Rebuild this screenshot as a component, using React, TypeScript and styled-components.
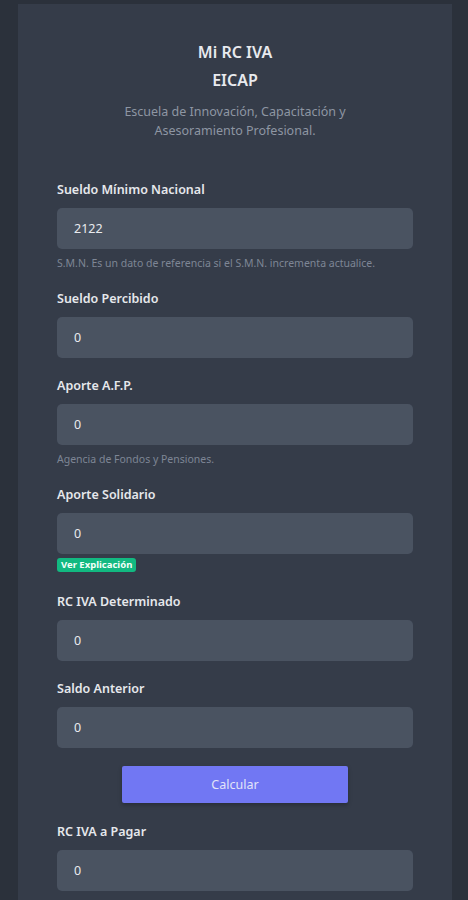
import React, { useState } from 'react';
import styled, { createGlobalStyle } from 'styled-components';

const GlobalStyle = createGlobalStyle`
  html, body {
    margin: 0;
    padding: 0;
    background: #2b313b;
  }
  body {
    font-family: 'Noto Sans', 'Open Sans', sans-serif;
    color: #e5e7eb;
  }
  * {
    box-sizing: border-box;
  }
`;

const Page = styled.main`
  padding: 4px 16px 0 18px;
  min-height: 900px;
`;

const Card = styled.div`
  background: #353c49;
  width: 434px;
  padding: 34px 39px 40px;
`;

const Header = styled.header`
  text-align: center;
  margin-bottom: 41px;
`;

const Title = styled.h1`
  margin: 0;
  font-size: 16px;
  font-weight: 600;
  line-height: 28px;
  color: #e8eaee;
`;

const Subtitle = styled.p`
  margin: 8px auto 0;
  width: 250px;
  font-size: 12.5px;
  line-height: 19px;
  color: #8e96a3;
`;

const Form = styled.form`
  display: flex;
  flex-direction: column;
`;

const Field = styled.div<{ $gap?: number }>`
  display: flex;
  flex-direction: column;
  margin-bottom: ${(p) => p.$gap ?? 19}px;
`;

const Label = styled.label`
  font-size: 12.5px;
  font-weight: 600;
  line-height: 18px;
  color: #e6e8ec;
  margin-bottom: 9px;
`;

const Input = styled.input`
  height: 41px;
  width: 100%;
  border: none;
  border-radius: 5px;
  background: #4a5361;
  color: #e9ebef;
  font-family: inherit;
  font-size: 12.5px;
  padding: 0 17px;
  outline: none;
`;

const Help = styled.span`
  margin-top: 7px;
  font-size: 10.5px;
  line-height: 14px;
  color: #7e8695;
`;

const Badge = styled.button`
  align-self: flex-start;
  margin-top: 4px;
  border: none;
  border-radius: 3px;
  background: #12b981;
  color: #f2fff9;
  font-family: inherit;
  font-size: 9.5px;
  font-weight: 700;
  line-height: 14px;
  padding: 0 4px;
  cursor: pointer;
`;

const Submit = styled.button`
  align-self: center;
  width: 226px;
  height: 37px;
  margin-bottom: 20px;
  border: none;
  border-radius: 2px;
  background: #7177f3;
  color: #e2e4f8;
  font-family: inherit;
  font-size: 12.5px;
  cursor: pointer;
  box-shadow: 0 2px 4px rgba(0, 0, 0, 0.25);
`;

type FieldDef = {
  key: string;
  label: string;
  help?: string;
  badge?: boolean;
  gap?: number;
};

const fields: FieldDef[] = [
  { key: 'smn', label: 'Sueldo Mínimo Nacional', help: 'S.M.N. Es un dato de referencia si el S.M.N. incrementa actualice.', gap: 20 },
  { key: 'sueldo', label: 'Sueldo Percibido' },
  { key: 'afp', label: 'Aporte A.F.P.', help: 'Agencia de Fondos y Pensiones.', gap: 20 },
  { key: 'solidario', label: 'Aporte Solidario', badge: true, gap: 21 },
  { key: 'determinado', label: 'RC IVA Determinado' },
  { key: 'saldo', label: 'Saldo Anterior', gap: 18 },
];

function App() {
  const [values, setValues] = useState<Record<string, string>>({
    smn: '2122',
    sueldo: '0',
    afp: '0',
    solidario: '0',
    determinado: '0',
    saldo: '0',
  });
  const [result, setResult] = useState('0');

  const handleChange = (key: string) => (e: React.ChangeEvent<HTMLInputElement>) => {
    setValues({ ...values, [key]: e.target.value });
  };

  const handleSubmit = (e: React.FormEvent<HTMLFormElement>) => {
    e.preventDefault();
    const det = Number(values.determinado) || 0;
    const saldo = Number(values.saldo) || 0;
    setResult(String(Math.max(det - saldo, 0)));
  };

  return (
    <Page>
      <GlobalStyle />
      <Card>
        <Header>
          <Title>Mi RC IVA</Title>
          <Title>EICAP</Title>
          <Subtitle>Escuela de Innovación, Capacitación y Asesoramiento Profesional.</Subtitle>
        </Header>
        <Form onSubmit={handleSubmit}>
          {fields.map((f) => (
            <Field key={f.key} $gap={f.gap}>
              <Label htmlFor={f.key}>{f.label}</Label>
              <Input id={f.key} value={values[f.key]} onChange={handleChange(f.key)} />
              {f.help && <Help>{f.help}</Help>}
              {f.badge && <Badge type="button">Ver Explicación</Badge>}
            </Field>
          ))}
          <Submit type="submit">Calcular</Submit>
          <Field>
            <Label htmlFor="pagar">RC IVA a Pagar</Label>
            <Input id="pagar" value={result} readOnly />
          </Field>
        </Form>
      </Card>
    </Page>
  );
}

export default App;
